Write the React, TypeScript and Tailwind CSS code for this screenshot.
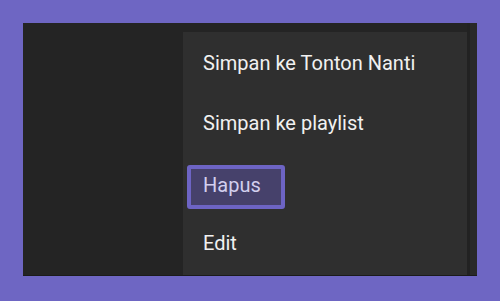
export default function App() {
  return (
    <div
      className="w-[500px] h-[301px] bg-[#6e66c3] pt-[23px] pl-[23px]"
      style={{ fontFamily: "Roboto, 'Liberation Sans', sans-serif" }}
    >
      <div className="w-[454px] h-[253px] bg-[#242424] flex border-b border-[#1b1b1b]">
        <div className="w-[160px] shrink-0" />
        <div className="w-[284px] shrink-0 mt-[9px] bg-[#2f2f2f] pt-[1px] text-[20px] leading-[28px] text-[#f1f1f1]">
          <div className="h-[60px] flex items-center pl-[20px]">Simpan ke Tonton Nanti</div>
          <div className="h-[60px] flex items-center pl-[20px]">Simpan ke playlist</div>
          <div className="h-[60px] flex items-start pt-[12px] pl-[4px]">
            <div className="border-[4px] border-[#6d64c4] rounded-[3px] bg-[#46416b] pl-[12px] pr-[20px] pt-[2px] pb-[6px] text-[#d3cfee]">
              Hapus
            </div>
          </div>
          <div className="h-[60px] flex items-center pl-[20px]">Edit</div>
        </div>
        <div className="flex-1 bg-[#292929] border-l-[3px] border-[#222]" />
      </div>
    </div>
  );
}
